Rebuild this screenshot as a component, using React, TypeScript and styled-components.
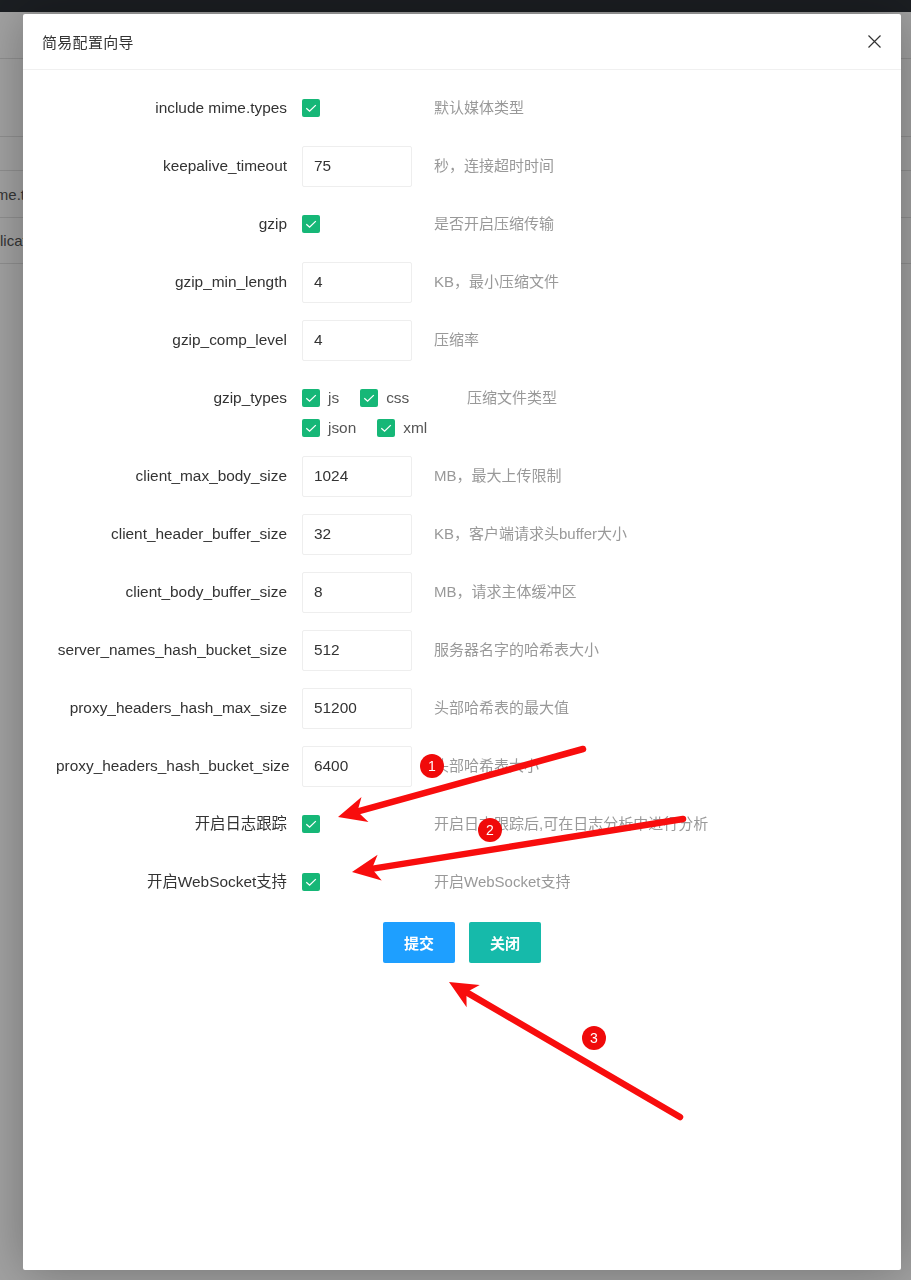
import React from 'react';
import styled, { createGlobalStyle } from 'styled-components';

const GlobalStyle = createGlobalStyle`
  html, body {
    margin: 0;
    padding: 0;
    background: #fff;
  }
  body {
    font-family: "Liberation Sans", "Noto Sans CJK SC", Arial, sans-serif;
    color: #333;
    overflow: hidden;
  }
  * {
    box-sizing: border-box;
  }
`;

interface FieldRow {
  label: string;
  kind: 'check' | 'input' | 'group';
  value?: string;
  help: string;
}

const ROWS: FieldRow[] = [
  { label: 'include mime.types', kind: 'check', help: '默认媒体类型' },
  { label: 'keepalive_timeout', kind: 'input', value: '75', help: '秒，连接超时时间' },
  { label: 'gzip', kind: 'check', help: '是否开启压缩传输' },
  { label: 'gzip_min_length', kind: 'input', value: '4', help: 'KB，最小压缩文件' },
  { label: 'gzip_comp_level', kind: 'input', value: '4', help: '压缩率' },
  { label: 'gzip_types', kind: 'group', help: '压缩文件类型' },
  { label: 'client_max_body_size', kind: 'input', value: '1024', help: 'MB，最大上传限制' },
  { label: 'client_header_buffer_size', kind: 'input', value: '32', help: 'KB，客户端请求头buffer大小' },
  { label: 'client_body_buffer_size', kind: 'input', value: '8', help: 'MB，请求主体缓冲区' },
  { label: 'server_names_hash_bucket_size', kind: 'input', value: '512', help: '服务器名字的哈希表大小' },
  { label: 'proxy_headers_hash_max_size', kind: 'input', value: '51200', help: '头部哈希表的最大值' },
  { label: 'proxy_headers_hash_bucket_size', kind: 'input', value: '6400', help: '头部哈希表大小' },
  { label: '开启日志跟踪', kind: 'check', help: '开启日志跟踪后,可在日志分析中进行分析' },
  { label: '开启WebSocket支持', kind: 'check', help: '开启WebSocket支持' },
];

const GZIP_TYPES = [
  ['js', 'css'],
  ['json', 'xml'],
];

// red arrows drawn over the screenshot: tail -> tip
const ARROWS = [
  { from: [583, 749], to: [338, 817] },
  { from: [683, 819], to: [352, 872] },
  { from: [680, 1117], to: [449, 982] },
];

const BADGES = [
  { x: 432, y: 766, n: '1' },
  { x: 490, y: 830, n: '2' },
  { x: 594, y: 1038, n: '3' },
];

const Check = () => (
  <CheckBox>
    <svg width="18" height="18" viewBox="0 0 18 18">
      <path d="M4.3 9.3 L7.6 12.2 L13.8 6.1" fill="none" stroke="#fff" strokeWidth="1.3" />
    </svg>
  </CheckBox>
);

const arrowHead = (from: number[], to: number[]) => {
  const dx = to[0] - from[0];
  const dy = to[1] - from[1];
  const len = Math.hypot(dx, dy);
  const ux = dx / len;
  const uy = dy / len;
  const nx = -uy;
  const ny = ux;
  const L = 28;
  const W = 13;
  const a = [to[0] - ux * L + nx * W, to[1] - uy * L + ny * W];
  const b = [to[0] - ux * L - nx * W, to[1] - uy * L - ny * W];
  const notch = [to[0] - ux * L * 0.72, to[1] - uy * L * 0.72];
  const lineEnd = [to[0] - ux * 18, to[1] - uy * 18];
  return {
    points: [to, a, notch, b].map(p => p.join(',')).join(' '),
    lineEnd,
  };
};

const App = () => {
  return (
    <>
      <GlobalStyle />
      <BehindPage>
        <TopBar />
        <BgRow $h={47} />
        <BgRow $h={78} />
        <BgRow $h={34} />
        <BgRow $h={47}>
          <BgCell $indent={-20}>mime.types</BgCell>
        </BgRow>
        <BgRow $h={46}>
          <BgCell $indent={-25}>application</BgCell>
        </BgRow>
      </BehindPage>
      <Shade />

      <Modal>
        <ModalHeader>
          <ModalTitle>简易配置向导</ModalTitle>
          <CloseButton aria-label="close">
            <svg width="13" height="13" viewBox="0 0 13 13">
              <path d="M0.5 0.5 L12.5 12.5 M12.5 0.5 L0.5 12.5" stroke="#333" strokeWidth="1.2" />
            </svg>
          </CloseButton>
        </ModalHeader>

        <ModalBody>
          {ROWS.map(row => (
            <Row key={row.label} $mb={row.kind === 'group' ? 13 : 18}>
              <Label>{row.label}</Label>
              {row.kind === 'input' && (
                <Control>
                  <TextInput defaultValue={row.value} />
                </Control>
              )}
              {row.kind === 'check' && (
                <Control>
                  <Check />
                </Control>
              )}
              {row.kind === 'group' && (
                <Group>
                  {GZIP_TYPES.map((line, i) => (
                    <GroupLine key={i}>
                      {line.map(t => (
                        <GroupItem key={t}>
                          <Check />
                          <ItemText>{t}</ItemText>
                        </GroupItem>
                      ))}
                    </GroupLine>
                  ))}
                </Group>
              )}
              <Help>{row.help}</Help>
            </Row>
          ))}

          <Buttons>
            <Button $bg="#1e9fff">提交</Button>
            <Button $bg="#16baaa">关闭</Button>
          </Buttons>
        </ModalBody>
      </Modal>

      <Annotations width="911" height="1280" viewBox="0 0 911 1280">
        {ARROWS.map((a, i) => {
          const head = arrowHead(a.from, a.to);
          return (
            <g key={i}>
              <line
                x1={a.from[0]}
                y1={a.from[1]}
                x2={head.lineEnd[0]}
                y2={head.lineEnd[1]}
                stroke="#f80d0d"
                strokeWidth="6.5"
                strokeLinecap="round"
              />
              <polygon points={head.points} fill="#f80d0d" />
            </g>
          );
        })}
        {BADGES.map(b => (
          <g key={b.n}>
            <circle cx={b.x} cy={b.y} r="12" fill="#f00a0a" />
            <text
              x={b.x}
              y={b.y + 5}
              textAnchor="middle"
              fontSize="14"
              fill="#fff"
              fontFamily="Liberation Sans, Arial, sans-serif"
            >
              {b.n}
            </text>
          </g>
        ))}
      </Annotations>
    </>
  );
};

export default App;

const BehindPage = styled.div`
  width: 911px;
  height: 1280px;
  background: #fff;
`;

const TopBar = styled.div`
  height: 12px;
  background: #2b3036;
`;

const BgRow = styled.div<{ $h: number }>`
  height: ${p => p.$h}px;
  border-bottom: 1px solid #e2e2e2;
  display: flex;
  align-items: center;
`;

const BgCell = styled.div<{ $indent: number }>`
  width: 60px;
  overflow: hidden;
  white-space: nowrap;
  text-indent: ${p => p.$indent}px;
  font-size: 15px;
  color: #555;
`;

const Shade = styled.div`
  position: fixed;
  inset: 0;
  background: rgba(0, 0, 0, 0.37);
`;

const Modal = styled.div`
  position: fixed;
  left: 23px;
  top: 14px;
  width: 878px;
  height: 1256px;
  background: #fff;
  border-radius: 2px;
  box-shadow: 1px 1px 50px rgba(0, 0, 0, 0.3);
  display: flex;
  flex-direction: column;
`;

const ModalHeader = styled.div`
  height: 56px;
  flex-shrink: 0;
  display: flex;
  align-items: center;
  justify-content: space-between;
  padding: 0 20px 0 19px;
  border-bottom: 1px solid #f0f0f0;
`;

const ModalTitle = styled.div`
  font-size: 15px;
  color: #333;
  font-family: "Noto Sans CJK SC", "Liberation Sans", sans-serif;
  letter-spacing: 0.3px;
`;

const CloseButton = styled.button`
  border: none;
  background: transparent;
  padding: 0;
  width: 13px;
  height: 13px;
  display: flex;
`;

const ModalBody = styled.div`
  padding: 18px 18px 0 18px;
`;

const Row = styled.div<{ $mb: number }>`
  display: flex;
  align-items: flex-start;
  margin-bottom: ${p => p.$mb}px;
`;

const Label = styled.div`
  width: 261px;
  flex-shrink: 0;
  padding: 0 15px;
  line-height: 40px;
  text-align: right;
  white-space: nowrap;
  font-size: 15.4px;
  color: #333;
`;

const Control = styled.div`
  width: 110px;
  height: 40px;
  flex-shrink: 0;
  display: flex;
  align-items: center;
  margin-right: 22px;
`;

const TextInput = styled.input`
  width: 110px;
  height: 41px;
  border: 1px solid #eee;
  border-radius: 2px;
  padding: 0 11px;
  font-size: 15.4px;
  font-family: "Liberation Sans", Arial, sans-serif;
  color: #333;
  background: #fff;
  outline: none;
`;

const CheckBox = styled.span`
  width: 18px;
  height: 18px;
  border-radius: 2px;
  background: #16b777;
  display: inline-flex;
  flex-shrink: 0;
`;

const Group = styled.div`
  width: 143px;
  flex-shrink: 0;
  padding-top: 5px;
  margin-right: 22px;
`;

const GroupLine = styled.div`
  height: 30px;
  display: flex;
  align-items: center;
`;

const GroupItem = styled.span`
  display: inline-flex;
  align-items: center;
  gap: 8px;
  margin-right: 21px;
`;

const ItemText = styled.span`
  font-size: 15.4px;
  color: #555;
`;

const Help = styled.div`
  line-height: 40px;
  font-size: 15px;
  color: #999;
  white-space: nowrap;
  font-family: "Liberation Sans", "Noto Sans CJK SC", sans-serif;
`;

const Buttons = styled.div`
  display: flex;
  justify-content: center;
  gap: 14px;
  padding-top: 2px;
`;

const Button = styled.button<{ $bg: string }>`
  width: 72px;
  height: 41px;
  border: none;
  border-radius: 2px;
  background: ${p => p.$bg};
  color: #fff;
  font-size: 15px;
  font-weight: 700;
  font-family: "Noto Sans CJK SC", sans-serif;
  cursor: pointer;
`;

const Annotations = styled.svg`
  position: fixed;
  left: 0;
  top: 0;
  pointer-events: none;
`;
